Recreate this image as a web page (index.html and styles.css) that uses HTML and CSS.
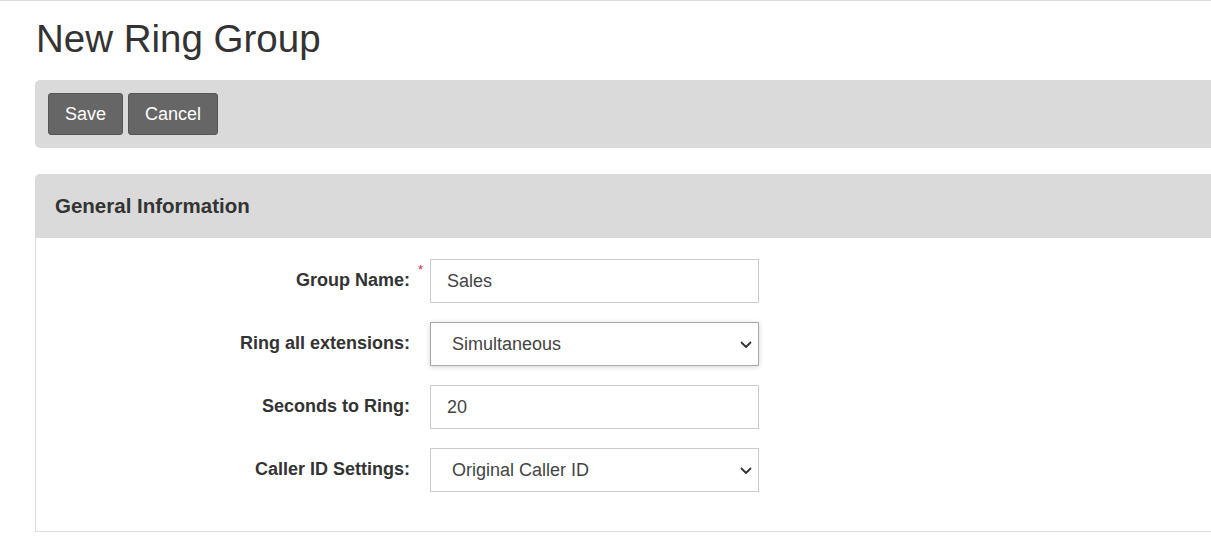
FILE: index.html
```html
<!DOCTYPE html>
<html lang="en">
<head>
<meta charset="utf-8">
<title>New Ring Group</title>
<link rel="stylesheet" href="styles.css">
</head>
<body>
<div class="page">
  <h1 class="title">New Ring Group</h1>
  <div class="toolbar">
    <button class="btn" type="button">Save</button>
    <button class="btn" type="button">Cancel</button>
  </div>
  <section class="panel">
    <div class="panel-head">General Information</div>
    <div class="panel-body">
      <div class="row">
        <label class="label">Group Name:<span class="req">*</span></label>
        <input class="field" type="text" value="Sales">
      </div>
      <div class="row">
        <label class="label">Ring all extensions:</label>
        <div class="select-wrap">
          <select class="field select focused">
            <option>Simultaneous</option>
          </select>
          <svg class="chev" viewBox="0 0 12 8" width="12" height="8"><path d="M1.5 1.5 L6 6 L10.5 1.5" fill="none" stroke="#333" stroke-width="1.8" stroke-linecap="round" stroke-linejoin="round"/></svg>
        </div>
      </div>
      <div class="row">
        <label class="label">Seconds to Ring:</label>
        <input class="field" type="text" value="20">
      </div>
      <div class="row">
        <label class="label">Caller ID Settings:</label>
        <div class="select-wrap">
          <select class="field select">
            <option>Original Caller ID</option>
          </select>
          <svg class="chev" viewBox="0 0 12 8" width="12" height="8"><path d="M1.5 1.5 L6 6 L10.5 1.5" fill="none" stroke="#333" stroke-width="1.8" stroke-linecap="round" stroke-linejoin="round"/></svg>
        </div>
      </div>
    </div>
  </section>
</div>
</body>
</html>
```

FILE: styles.css
```css
html, body {
  margin: 0;
  padding: 0;
  background: #fff;
}
body {
  border-top: 1px solid #dedede;
  font-family: "Liberation Sans", Arial, sans-serif;
  color: #333;
  overflow: hidden;
}
.page {
  margin-left: 35px;
}
.title {
  margin: 17px 0 20px 1px;
  font-size: 38.5px;
  font-weight: normal;
  line-height: 42px;
  color: #333;
}
.toolbar {
  display: flex;
  gap: 5px;
  padding: 13px 13px;
  background: #dadada;
  border-radius: 5px 0 0 5px;
}
.btn {
  height: 42px;
  padding: 0 16px;
  background: #666;
  border: 1px solid #555;
  border-radius: 3px;
  color: #fff;
  font-family: "Liberation Sans", Arial, sans-serif;
  font-size: 18px;
  line-height: 1;
}
.panel {
  margin-top: 26px;
}
.panel-head {
  height: 64px;
  display: flex;
  align-items: center;
  padding-left: 20px;
  background: #dadada;
  border-radius: 5px 0 0 0;
  font-size: 20.5px;
  font-weight: bold;
  color: #333;
}
.panel-body {
  border-left: 1px solid #dcdcdc;
  border-bottom: 1px solid #dcdcdc;
  padding: 21px 0 39px;
  display: flex;
  flex-direction: column;
  gap: 19px;
}
.row {
  display: flex;
  align-items: center;
}
.label {
  width: 374px;
  position: relative;
  text-align: right;
  font-size: 18px;
  font-weight: bold;
  color: #333;
  margin-right: 20px;
  padding-bottom: 1px;
}
.req {
  position: absolute;
  right: -13px;
  top: -8px;
  color: #c9302c;
  font-size: 13px;
  font-weight: normal;
}
.field {
  box-sizing: border-box;
  width: 329px;
  height: 44px;
  margin: 0;
  padding: 0 16px;
  border: 1px solid #ccc;
  border-radius: 0;
  background: #fff;
  font-family: "Liberation Sans", Arial, sans-serif;
  font-size: 18px;
  color: #444;
  outline: none;
}
.select-wrap {
  position: relative;
  width: 329px;
  height: 44px;
}
.select {
  appearance: none;
  -webkit-appearance: none;
  padding-left: 21px;
}
.select.focused {
  border-color: #a9a9a9;
  box-shadow: 0 1px 5px rgba(0, 0, 0, 0.18);
}
.chev {
  position: absolute;
  right: 7px;
  top: 19px;
  pointer-events: none;
}
```
